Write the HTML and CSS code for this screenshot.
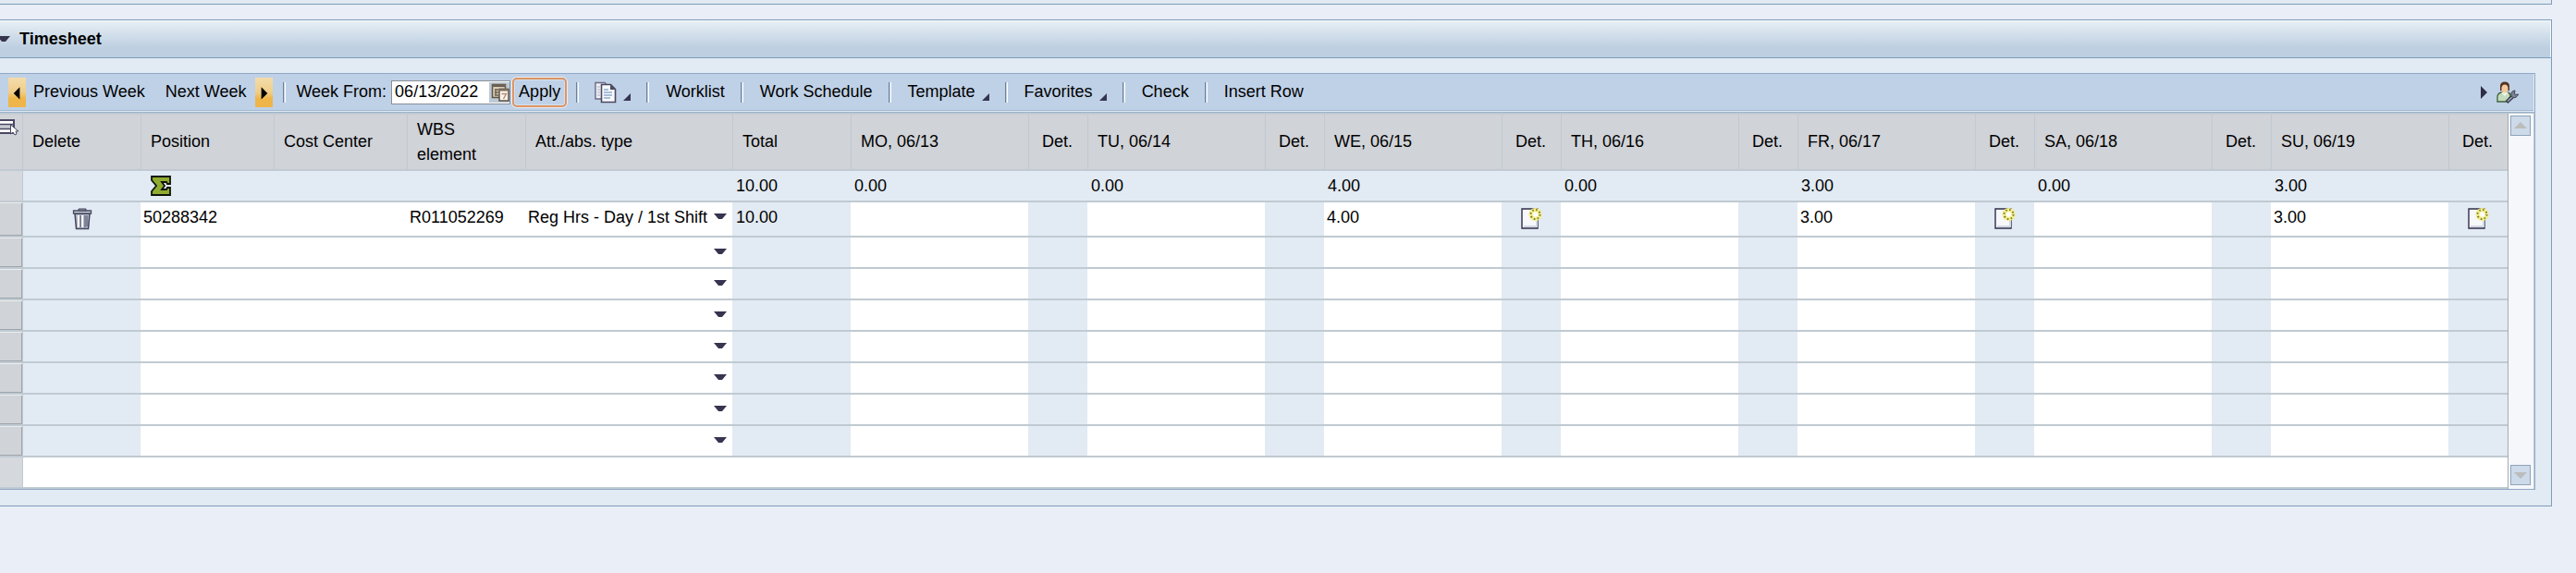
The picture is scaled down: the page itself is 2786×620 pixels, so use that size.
FILE: index.html
```html
<!DOCTYPE html>
<html lang="en">
<head>
<meta charset="utf-8">
<title>Timesheet</title>
<link rel="stylesheet" href="styles.css">
</head>
<body>
<svg class="defs" aria-hidden="true">
  <symbol id="i-new" viewBox="0 0 24 24">
    <path d="M2 1h17v21H2z" fill="#f6f8fb" stroke="#2f2d48" stroke-width="1.4"/>
    <path d="M4 20h14V9" fill="none" stroke="#d3d9e2" stroke-width="2"/>
    <circle cx="16.500" cy="7" r="7" fill="#f3ef86"/>
    <circle cx="16.500" cy="7" r="5" fill="none" stroke="#77743a" stroke-width="2" stroke-dasharray="1.500 2.430"/>
    <circle cx="16.500" cy="7" r="2.800" fill="#fff"/>
  </symbol>
  <symbol id="i-down" viewBox="0 0 14 8"><path d="M0 1h14L9 7H5z" fill="#36344f"/></symbol>
  <symbol id="i-corner" viewBox="0 0 8 8"><path d="M8 0v8H0z" fill="#36344f"/></symbol>
</svg>

<section class="panel panel-prev"></section>

<section class="panel">
  <h2 class="panel-head">
    <svg class="tri" viewBox="0 0 14 8"><path d="M0 1h14L9 7H5z" fill="#36344f"/></svg>
    Timesheet
  </h2>
  <div class="panel-body">
    <div class="sheet">
      <div class="toolbar">
        <button class="tb week prev"><span class="pager"><svg viewBox="0 0 20 32"><path d="M13 10v14l-7-7z"/></svg></span>Previous Week</button>
        <button class="tb week next">Next Week<span class="pager"><svg viewBox="0 0 20 32"><path d="M7 10v14l7-7z"/></svg></span></button>
        <i class="sep near"></i>
        <label for="from">Week From:</label>
        <span class="date">
          <input id="from" type="text" value="06/13/2022">
          <button class="cal" aria-label="Choose date">
            <svg viewBox="0 0 22 22">
              <path d="M3.500 2.500h14v14h-14z" fill="#d6ceb6" stroke="#5f5245" stroke-width="1.500"/>
              <path d="M3 2h15v3H3z" fill="#6d5f50"/>
              <path d="M6 8h4M6 11h4M6 14h4M7 8v6" fill="none" stroke="#6d5f50" stroke-width="1.300"/>
              <path d="M11 8h10v12H11z" fill="#fbf5ee" stroke="#5f5245" stroke-width="1.500"/>
              <path d="M10.500 6.500h11v3h-11z" fill="#7d6d5c"/>
              <path d="M13.500 12.500h5l-3 5.500" fill="none" stroke="#b98a70" stroke-width="1.500"/>
            </svg>
          </button>
        </span>
        <button class="tb apply">Apply</button>
        <i class="sep after-apply"></i>
        <button class="tb menu" aria-label="Copy">
          <svg class="ico" viewBox="0 0 24 24">
            <path d="M1 1.500h10l3 3V19H1z" fill="#eef1f6" stroke="#6c6a84" stroke-width="1.400"/>
            <path d="M3 6h3M3 9h3M3 12h3M3 15h3" stroke="#a4adbd"/>
            <path d="M7.500 3.500h10l5 5v14h-15z" fill="#f8fafc" stroke="#4a4862" stroke-width="1.600"/>
            <path d="M17 3.500v5.500h5.500z" fill="#4a4862"/>
            <path d="M10 9h5M10 12h9M10 15h9M10 18h7" stroke="#8fa9cb" stroke-width="1.300"/>
          </svg>
          <svg class="corner"><use href="#i-corner"/></svg>
        </button>
        <i class="sep"></i>
        <button class="tb">Worklist</button>
        <i class="sep"></i>
        <button class="tb">Work Schedule</button>
        <i class="sep"></i>
        <button class="tb menu">Template<svg class="corner"><use href="#i-corner"/></svg></button>
        <i class="sep"></i>
        <button class="tb menu">Favorites<svg class="corner"><use href="#i-corner"/></svg></button>
        <i class="sep"></i>
        <button class="tb">Check</button>
        <i class="sep"></i>
        <button class="tb">Insert Row</button>
        <div class="tools">
          <button class="tb" aria-label="More"><svg class="more" viewBox="0 0 8 14"><path d="M1 0l7 7-7 7z" fill="#2f2d48"/></svg></button>
          <button class="tb" aria-label="Settings">
            <svg class="ico" viewBox="0 0 24 24">
              <path d="M1 22v-5c0-4 3-5 6-5h4c3 0 4 1 4 4l-4 6z" fill="#c4dcbd" stroke="#40603a" stroke-width="1.300"/>
              <path d="M5 12l4 4 4-4z" fill="#eef6ea"/>
              <path d="M4 10V5c0-3 2-4.500 5-4.500S14 2 14 5v5z" fill="#54331f"/>
              <ellipse cx="9" cy="8" rx="3.600" ry="4.500" fill="#f2c9a0"/>
              <path d="M11 22.500l6-5.500" stroke="#3c3f50" stroke-width="4"/>
              <path d="M12 21.500l5-4.500" stroke="#a9b0bf" stroke-width="1.200"/>
              <path d="M20 10c-3 0-5 3-4 6 2 3 6 2 7.500-2l-3 .500-1-1.500z" fill="#7c8295" stroke="#3c3f50"/>
            </svg>
          </button>
        </div>
      </div>

      <div class="grid">
        <table>
          <colgroup id="cols"></colgroup>
          <thead><tr id="head"></tr></thead>
          <tbody id="rows"></tbody>
        </table>
        <div class="scroll">
          <button aria-label="Scroll up"><svg viewBox="0 0 14 8"><path d="M7 0l7 7H0z" fill="#bcbcbc"/></svg></button>
          <button aria-label="Scroll down"><svg viewBox="0 0 14 8"><path d="M0 1h14L7 8z" fill="#bcbcbc"/></svg></button>
        </div>
      </div>
    </div>
  </div>
</section>
<script src="app.js"></script>
</body>
</html>
```

FILE: styles.css
```css
* { box-sizing: border-box; }

body {
  margin: 0;
  min-height: 100vh;
  padding-right: 26px;
  background: #e9eef7;
  color: #000;
  font: 18px/27px "Liberation Sans", Arial, sans-serif;
}

svg { display: block; flex: none; }
.defs { display: none; }

button, input, select {
  font: inherit;
  color: inherit;
  margin: 0;
  padding: 0;
  border: 0;
  border-radius: 0;
  background: none;
  appearance: none;
  outline: none;
}

.panel {
  border: 1px solid #7f9db9;
  border-left: 0;
  background: #e2eaf3;
}

.panel-prev {
  height: 5px;
  border-top: 0;
  margin-bottom: 16px;
}

.panel-head {
  display: flex;
  align-items: center;
  gap: 10px;
  height: 41px;
  margin: 0;
  border-bottom: 1px solid #7b9fbc;
  box-shadow: inset -1px 1px #f7fafc;
  background: linear-gradient(#e8f0f5, #bdcfe1 75%);
  font-size: 18px;
  font-weight: bold;
}

.tri { width: 14px; height: 8px; margin-left: -3px; }

.panel-body { padding: 16px 17px 17px 0; }

.sheet {
  border: 1px solid #8fa9c6;
  border-left: 0;
}

.toolbar {
  display: flex;
  align-items: center;
  height: 40px;
  margin-right: 1px;
  padding-left: 9px;
  background: #bfd1e7;
  border-bottom: 1px solid #9fb9d2;
}

.tb {
  display: flex;
  align-items: center;
  white-space: nowrap;
}

.week { gap: 8px; }
.next { margin-left: 22px; gap: 10px; }

.pager {
  width: 19px;
  height: 32px;
  background: linear-gradient(#f4dcab, #f0cd88 50%, #eeb54a 70%);
}
.pager svg { width: 19px; height: 32px; }

.sep {
  width: 3px;
  height: 22px;
  margin: 0 18px 0 17px;
  border-left: 1px solid #6f7f98;
  border-right: 1px solid #fff;
}
.sep.near { margin: 0 11px; }
.sep.after-apply { margin: 0 17px 0 10px; }

.date {
  display: flex;
  align-items: center;
  width: 129px;
  height: 26px;
  margin-left: 5px;
  border: 1px solid #8a8f98;
  background: #fff;
}
.date input { flex: 1; min-width: 0; height: 24px; padding-left: 3px; }
.cal { height: 22px; background: #bccad6; }
.cal svg { width: 22px; height: 22px; }

.apply {
  height: 32px;
  margin-left: 2px;
  padding: 0 5px;
  border: 2px solid #dc9566;
  border-radius: 5px;
  box-shadow: 0 0 0 1px #e9edf2, inset 0 0 0 1px #d7e0ea;
}

.menu { gap: 7px; }
.ico { width: 24px; height: 24px; }
.corner { width: 8px; height: 8px; margin-top: 10px; }

.tools {
  display: flex;
  align-items: center;
  gap: 10px;
  margin-left: auto;
  padding-right: 16px;
}
.more { width: 8px; height: 14px; }

.grid {
  display: flex;
  margin-top: 1px;
  border-top: 1px solid #9ab2cb;
  background: #fff;
}

table {
  flex: 1;
  min-width: 0;
  table-layout: fixed;
  border-spacing: 0;
  border-top: 2px solid #c2cbd2;
  border-right: 1px solid #a9abae;
}

th, td {
  padding: 0;
  border-bottom: 2px solid #c0cad2;
  text-align: left;
  font-weight: normal;
}

th {
  height: 61px;
  padding: 0 10px;
  border-left: 1px solid #bfcad2;
  background: #d0d3d8;
}
th.det { padding: 0 0 0 14px; }
th.pick { padding: 5px 0 0; border-left: 0; vertical-align: top; }
.pick svg { width: 20px; height: 18px; }

td {
  height: 34px;
  background: #e2eaf3;
  line-height: 32px;
}
td.first { border-left: 1px solid #bfcad2; }
td.edit { background: #fff; }
td.num, td.edit { vertical-align: top; }
td.num { padding-left: 4px; }
td.mark { background: #d5d8dd; }
td.handle {
  background: linear-gradient(#a0a5ac, #a0a5ac) right / 1px 100% no-repeat, #d0d3d8;
  box-shadow: inset 0 1px #eceef0, inset 0 -1px #a0a5ac;
}
tr.filled td { height: 38px; }

td input {
  display: block;
  width: 100%;
  height: 32px;
  padding-left: 3px;
}

.combo {
  display: flex;
  align-items: center;
  height: 30px;
  padding: 0 6px 0 3px;
}
.combo select { flex: 1; min-width: 0; height: 30px; }
.combo svg { width: 14px; height: 8px; }

td button { display: block; margin: 0 auto; }
td button svg { width: 24px; height: 24px; }
.sigma { width: 22px; height: 22px; margin-left: 11px; }

.scroll {
  display: flex;
  flex-direction: column;
  justify-content: space-between;
  width: 28px;
  padding: 2px 4px 4px 2px;
  border-top: 1px solid #c2cbd2;
  border-right: 1px solid #c2cbd2;
  background: #f5f7fb;
}
.scroll button {
  display: flex;
  align-items: center;
  justify-content: center;
  width: 22px;
  height: 22px;
  border: 1px solid #8fa3b9;
  background: #cddaea;
}
.scroll svg { width: 14px; height: 8px; }
```

FILE: app.js
```js
const days = ["MO, 06/13", "TU, 06/14", "WE, 06/15", "TH, 06/16", "FR, 06/17", "SA, 06/18", "SU, 06/19"];
const totals = ["0.00", "0.00", "4.00", "0.00", "3.00", "0.00", "3.00"];
const entry = {
  position: "50288342",
  wbs: "R011052269",
  type: "Reg Hrs - Day / 1st Shift",
  total: "10.00",
  hours: ["", "", "4.00", "", "3.00", "", "3.00"]
};
const emptyRows = 7;

const widths = [24, 128, 144, 144, 128, 224, 128];
days.forEach(() => widths.push(192, 64));
const sum = widths.reduce((a, b) => a + b, 0);
document.getElementById("cols").innerHTML =
  widths.map(w => `<col style="width:${w / sum * 100}%">`).join("");

const pickIcon = `<svg viewBox="0 0 20 18"><path d="M-4 1h19v14H-4z" fill="#fff" stroke="#4a4862" stroke-width="2"/>
  <path d="M0 6h14v4H0z" fill="#c9ccd2"/><path d="M0 5.500h15M0 10.500h14" stroke="#4a4862" stroke-width="1.600"/>
  <path d="M11.500 6v10l2.500-2 2 3 2-1-1-3h3z" fill="#fff" stroke="#4a4862"/></svg>`;
const sigmaIcon = `<svg class="sigma" viewBox="0 0 22 22" role="img" aria-label="Sum"><path d="M1 1h20v8h-3l-1-2h-5l3 4-3 4h5l1-2h3v8H1v-4l5-6-5-6z" fill="#8fac30" stroke="#10140a" stroke-width="1.800"/></svg>`;
const trashIcon = `<svg viewBox="0 0 24 24"><path d="M4 6h16l-1.500 16.500h-13z" fill="#b5bac8" stroke="#45475c" stroke-width="1.500"/>
  <path d="M8 8v13M12 8v13" stroke="#f4f6fa" stroke-width="2"/><path d="M10 8v13M15 8v13M17 8v12" stroke="#6c7087" stroke-width="1.500"/>
  <path d="M2.500 3h19v3h-19z" fill="#cfd3de" stroke="#45475c" stroke-width="1.300"/><path d="M8 1h8v2H8z" fill="#8b90a3" stroke="#45475c"/></svg>`;

document.getElementById("head").innerHTML =
  `<th class="pick">${pickIcon}</th>` +
  ["Delete", "Position", "Cost Center", "WBS<br>element", "Att./abs. type", "Total"].map(t => `<th>${t}</th>`).join("") +
  days.map(d => `<th>${d}</th><th class="det">Det.</th>`).join("");

const field = (label, value) => `<td class="edit"><input type="text" aria-label="${label}" value="${value}"></td>`;

function row(r) {
  const filled = Boolean(r.position);
  return `<tr class="${filled ? "filled" : ""}"><td class="handle"></td>
    <td class="first">${filled ? `<button aria-label="Delete row">${trashIcon}</button>` : ""}</td>
    ${field("Position", r.position || "")}${field("Cost Center", "")}${field("WBS element", r.wbs || "")}
    <td class="edit"><label class="combo"><select aria-label="Att./abs. type"><option>${r.type || ""}</option></select>
      <svg><use href="#i-down"/></svg></label></td>
    <td class="num">${r.total || ""}</td>
    ${days.map((d, i) => {
      const h = r.hours ? r.hours[i] : "";
      return field(d, h) + `<td>${h ? `<button aria-label="Details"><svg><use href="#i-new"/></svg></button>` : ""}</td>`;
    }).join("")}</tr>`;
}

const sumRow = `<tr><td class="mark"></td><td class="first"></td><td>${sigmaIcon}</td><td></td><td></td><td></td>
  <td class="num">10.00</td>${totals.map(t => `<td class="num">${t}</td><td></td>`).join("")}</tr>`;
const lastRow = `<tr><td class="mark"></td><td class="first edit" colspan="20"></td></tr>`;

document.getElementById("rows").innerHTML =
  sumRow + row(entry) + row({}).repeat(emptyRows) + lastRow;
```
